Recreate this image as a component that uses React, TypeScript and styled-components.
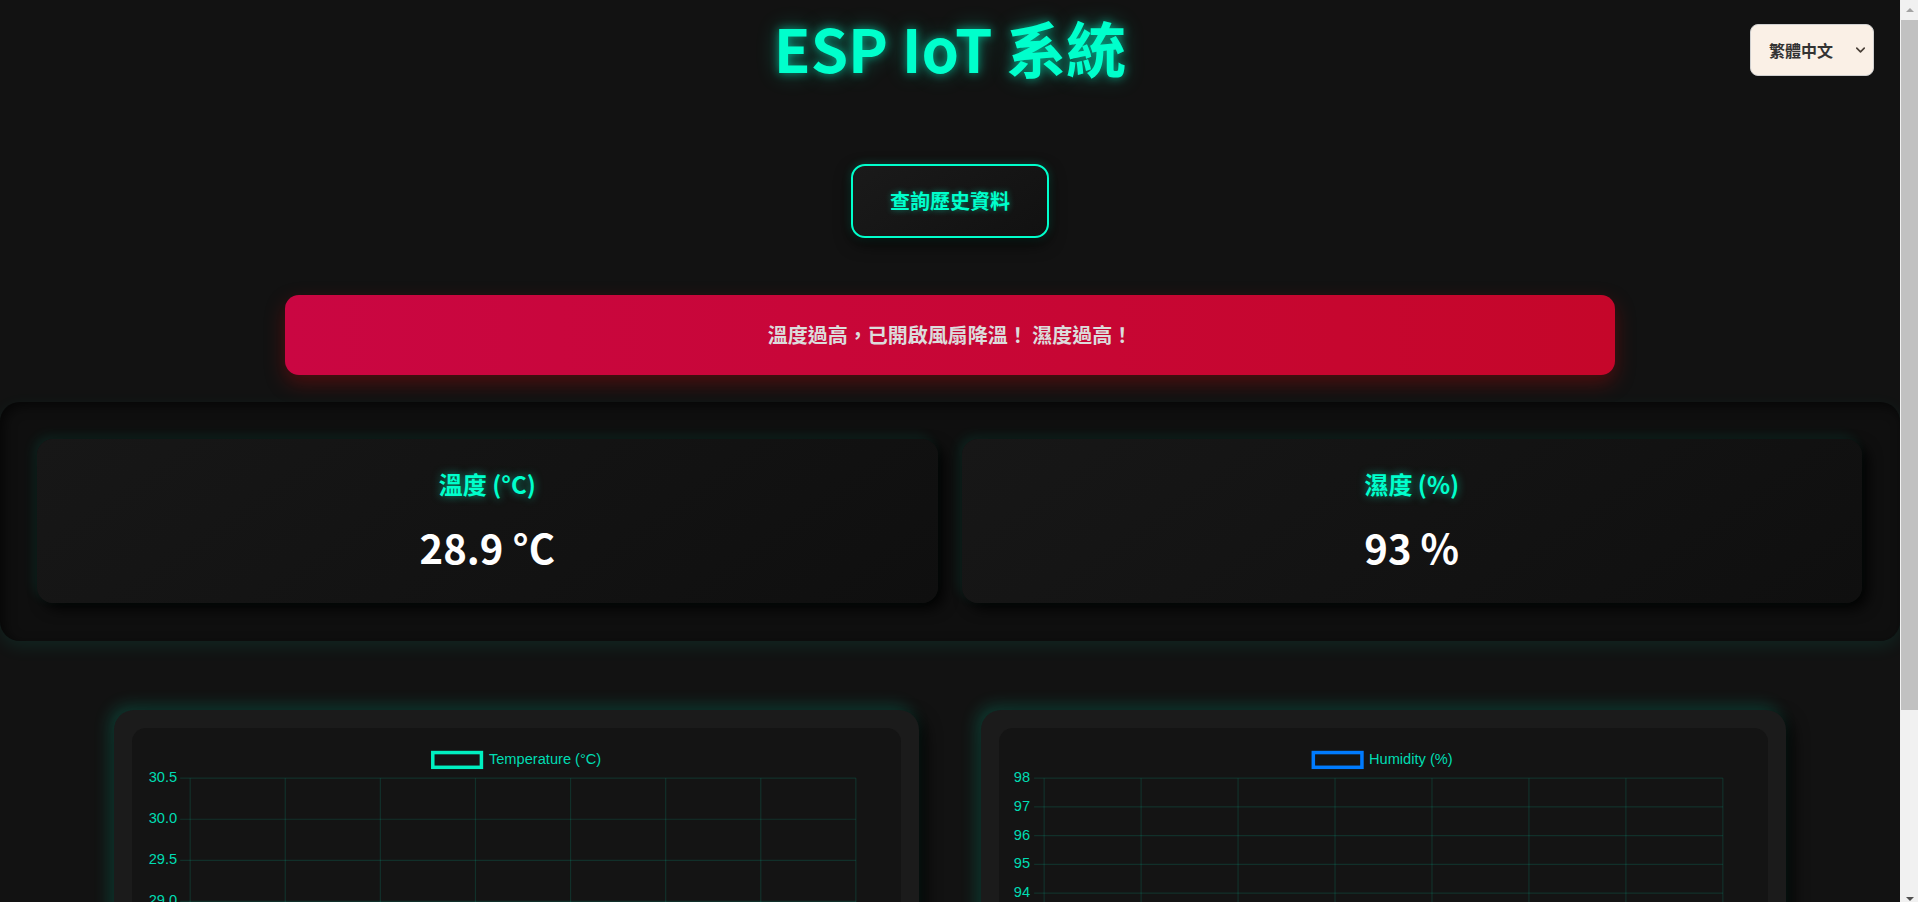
import React from "react";
import styled, { createGlobalStyle } from "styled-components";
import { ChevronDown } from "lucide-react";

const TEAL = "#00ffcc";

const GlobalStyle = createGlobalStyle`
  html {
    scrollbar-width: none;
  }
  html, body {
    margin: 0;
    padding: 0;
    background: #121212;
  }
  body {
    font-family: "Noto Sans CJK TC", "Noto Sans", sans-serif;
    color: #ffffff;
  }
`;

const Page = styled.div`
  padding: 0 18px 13px 0;
`;

/* imitation of the browser's classic scrollbar, drawn over the right edge */
const ScrollRail = styled.div`
  position: fixed;
  top: 0;
  right: 0;
  width: 18px;
  height: 100vh;
  background: #f1f1f1;
  display: flex;
  flex-direction: column;
`;

const ScrollArrow = styled.div<{ $h: number; $align: "start" | "end" }>`
  height: ${(p) => p.$h}px;
  display: flex;
  justify-content: center;
  align-items: ${(p) => (p.$align === "start" ? "flex-start" : "flex-end")};
  padding: ${(p) => (p.$align === "start" ? "8px 0 0 1px" : "0 0 1px 1px")};
  box-sizing: border-box;
`;

const ScrollThumb = styled.div`
  margin-left: 1px;
  height: 690px;
  background: #c1c1c1;
`;

const ScrollGap = styled.div`
  flex: 1;
`;

const Header = styled.header`
  position: relative;
  text-align: center;
`;

const Title = styled.h1`
  margin: 0;
  font-size: 60px;
  line-height: 93px;
  font-weight: 700;
  color: ${TEAL};
  text-shadow: 0 0 10px rgba(0, 255, 204, 0.55), 0 0 22px rgba(0, 255, 204, 0.3);
`;

const LangWrap = styled.div`
  position: absolute;
  top: 24px;
  right: 26px;
`;

const LangSelect = styled.select`
  appearance: none;
  -webkit-appearance: none;
  box-sizing: border-box;
  width: 124px;
  height: 52px;
  padding: 0 0 0 18px;
  border: 1px solid #cfcfcf;
  border-radius: 8px;
  background: #faf0e6;
  color: #333333;
  font-family: "Noto Sans CJK TC", sans-serif;
  font-size: 16px;
  font-weight: 700;
  outline: none;
`;

const ChevronSlot = styled.span`
  position: absolute;
  right: 6px;
  top: 50%;
  transform: translateY(-50%);
  display: flex;
  color: #4a4038;
  pointer-events: none;
`;

const Actions = styled.div`
  display: flex;
  justify-content: center;
  margin-top: 71px;
`;

const HistoryButton = styled.button`
  box-sizing: border-box;
  padding: 20px 37px;
  border: 2px solid ${TEAL};
  border-radius: 14px;
  background: linear-gradient(145deg, #1a1a1a, #111111);
  color: ${TEAL};
  font-family: "Noto Sans CJK TC", sans-serif;
  font-size: 20px;
  line-height: 30px;
  font-weight: 700;
  text-shadow: 0 0 6px rgba(0, 255, 204, 0.45);
  box-shadow: 0 6px 16px rgba(0, 0, 0, 0.7), 0 0 8px rgba(0, 255, 204, 0.25);
  cursor: pointer;
`;

const AlertBanner = styled.div`
  box-sizing: border-box;
  width: 70%;
  margin: 57px auto 0;
  padding: 25px 20px;
  border-radius: 14px;
  background: linear-gradient(90deg, #ca0642, #c5062a);
  color: #dcdcdc;
  text-align: center;
  font-size: 20px;
  line-height: 30px;
  font-weight: 700;
  box-shadow: 0 8px 20px rgba(190, 10, 10, 0.35);
`;

const SensorPanel = styled.section`
  margin-top: 27px;
  padding: 37px 38px 38px 37px;
  display: grid;
  grid-template-columns: 1fr 1fr;
  gap: 24px;
  background: #0f0f0f;
  border-radius: 20px;
  box-shadow: inset 4px 4px 12px rgba(0, 0, 0, 0.6), 0 6px 18px rgba(0, 255, 204, 0.08);
`;

const SensorCard = styled.div`
  padding: 27px 20px;
  text-align: center;
  border-radius: 16px;
  background: linear-gradient(145deg, #171717, #0f0f0f);
  box-shadow: -4px -4px 12px rgba(0, 255, 204, 0.08), 6px 6px 14px rgba(0, 0, 0, 0.85);
`;

const SensorLabel = styled.h2`
  margin: 0 0 17px;
  font-size: 24px;
  line-height: 35px;
  font-weight: 700;
  color: ${TEAL};
  text-shadow: 0 0 8px rgba(0, 255, 204, 0.55);
`;

const SensorValue = styled.div`
  font-size: 40px;
  line-height: 58px;
  font-weight: 700;
  color: #ffffff;
`;

const ChartGrid = styled.section`
  width: 88%;
  margin: 69px auto 0;
  display: grid;
  grid-template-columns: 1fr 1fr;
  gap: 62px;
`;

const ChartCard = styled.div`
  padding: 18px;
  border-radius: 20px;
  background: #1b1b1b;
  box-shadow: -5px -5px 16px rgba(0, 255, 204, 0.17), 6px 6px 16px rgba(0, 0, 0, 0.85);
`;

const ChartBox = styled.div`
  border-radius: 14px;
  background: #141414;
  overflow: hidden;
`;

const ChartSvg = styled.svg`
  display: block;
  width: 100%;
  height: auto;
  font-family: "Liberation Sans", Arial, sans-serif;
`;

const W = 767;
const H = 375;
const TOP = 50;
const PLOT_H = 287;
const RIGHT = 722;
const GRID = "rgba(0, 255, 204, 0.12)";
const TICK_COLOR = "#00dcb2";
const TIMES = ["14:20:05", "14:20:15", "14:20:25", "14:20:35", "14:20:45", "14:20:55", "14:21:05", "14:21:15"];

type ChartProps = {
  label: string;
  color: string;
  ticks: string[];
  min: number;
  max: number;
  axisX: number;
  labelX: number;
  legendX: number;
  legendTextX: number;
  data: number[];
};

function LineChart({ label, color, ticks, min, max, axisX, labelX, legendX, legendTextX, data }: ChartProps) {
  const cols = TIMES.length - 1;
  const xs = TIMES.map((_, i) => axisX + ((RIGHT - axisX) * i) / cols);
  const rows = ticks.length - 1;
  const ys = ticks.map((_, i) => TOP + (PLOT_H * i) / rows);
  const bottom = TOP + PLOT_H;
  const yOf = (v: number) => TOP + ((max - v) / (max - min)) * PLOT_H;
  const pts = data.map((v, i) => `${xs[i]},${yOf(v)}`).join(" ");
  return (
    <ChartSvg viewBox={`0 0 ${W} ${H}`}>
      <rect x={legendX} y={24.5} width={48.5} height={14.7} fill="none" stroke={color} strokeWidth={3.5} />
      <text x={legendTextX} y={32} fontSize={14.6} fill={TICK_COLOR} dominantBaseline="middle">
        {label}
      </text>
      {ys.map((y, i) => (
        <line key={`h${i}`} x1={axisX - 10} x2={RIGHT} y1={y} y2={y} stroke={GRID} strokeWidth={1.2} />
      ))}
      {xs.map((x, i) => (
        <line key={`v${i}`} x1={x} x2={x} y1={TOP} y2={bottom + 10} stroke={GRID} strokeWidth={1.2} />
      ))}
      {ticks.map((t, i) => (
        <text key={`t${i}`} x={labelX} y={ys[i]} fontSize={14.6} fill={TICK_COLOR} textAnchor="end" dominantBaseline="middle">
          {t}
        </text>
      ))}
      {TIMES.map((t, i) => (
        <text key={`x${i}`} x={xs[i]} y={bottom + 26} fontSize={14.6} fill={TICK_COLOR} textAnchor="middle">
          {t}
        </text>
      ))}
      <polyline points={pts} fill="none" stroke={color} strokeWidth={3} />
      {data.map((v, i) => (
        <circle key={`p${i}`} cx={xs[i]} cy={yOf(v)} r={3.7} fill={color} />
      ))}
    </ChartSvg>
  );
}

const tempTicks = ["30.5", "30.0", "29.5", "29.0", "28.5", "28.0", "27.5", "27.0"];
const humTicks = ["98", "97", "96", "95", "94", "93", "92", "91", "90", "89", "88"];

export default function App() {
  return (
    <Page>
      <GlobalStyle />
      <Header>
        <Title>ESP IoT 系統</Title>
        <LangWrap>
          <LangSelect defaultValue="zh-TW">
            <option value="zh-TW">繁體中文</option>
            <option value="en">English</option>
          </LangSelect>
          <ChevronSlot>
            <ChevronDown size={15} strokeWidth={2.6} />
          </ChevronSlot>
        </LangWrap>
      </Header>

      <Actions>
        <HistoryButton type="button">查詢歷史資料</HistoryButton>
      </Actions>

      <AlertBanner>溫度過高，已開啟風扇降溫！ 濕度過高！</AlertBanner>

      <SensorPanel>
        <SensorCard>
          <SensorLabel>溫度 (°C)</SensorLabel>
          <SensorValue>28.9 °C</SensorValue>
        </SensorCard>
        <SensorCard>
          <SensorLabel>濕度 (%)</SensorLabel>
          <SensorValue>93 %</SensorValue>
        </SensorCard>
      </SensorPanel>

      <ChartGrid>
        <ChartCard>
          <ChartBox>
            <LineChart
              label="Temperature (°C)"
              color="#00f0c0"
              ticks={tempTicks}
              min={27}
              max={30.5}
              axisX={58}
              labelX={45}
              legendX={300}
              legendTextX={356}
              data={[28.9, 28.9, 28.9, 28.9, 28.9, 28.9, 28.9, 28.9]}
            />
          </ChartBox>
        </ChartCard>
        <ChartCard>
          <ChartBox>
            <LineChart
              label="Humidity (%)"
              color="#007bff"
              ticks={humTicks}
              min={88}
              max={98}
              axisX={45}
              labelX={31}
              legendX={313.5}
              legendTextX={369}
              data={[93, 93, 93, 93, 93, 93, 93, 93]}
            />
          </ChartBox>
        </ChartCard>
      </ChartGrid>

      <ScrollRail aria-hidden="true">
        <ScrollArrow $h={20} $align="start">
          <svg width="8" height="4" viewBox="0 0 8 4">
            <polygon points="4,0 8,4 0,4" fill="#a3a3a3" />
          </svg>
        </ScrollArrow>
        <ScrollThumb />
        <ScrollGap />
        <ScrollArrow $h={14} $align="end">
          <svg width="8" height="4" viewBox="0 0 8 4">
            <polygon points="0,0 8,0 4,4" fill="#505050" />
          </svg>
        </ScrollArrow>
      </ScrollRail>
    </Page>
  );
}
